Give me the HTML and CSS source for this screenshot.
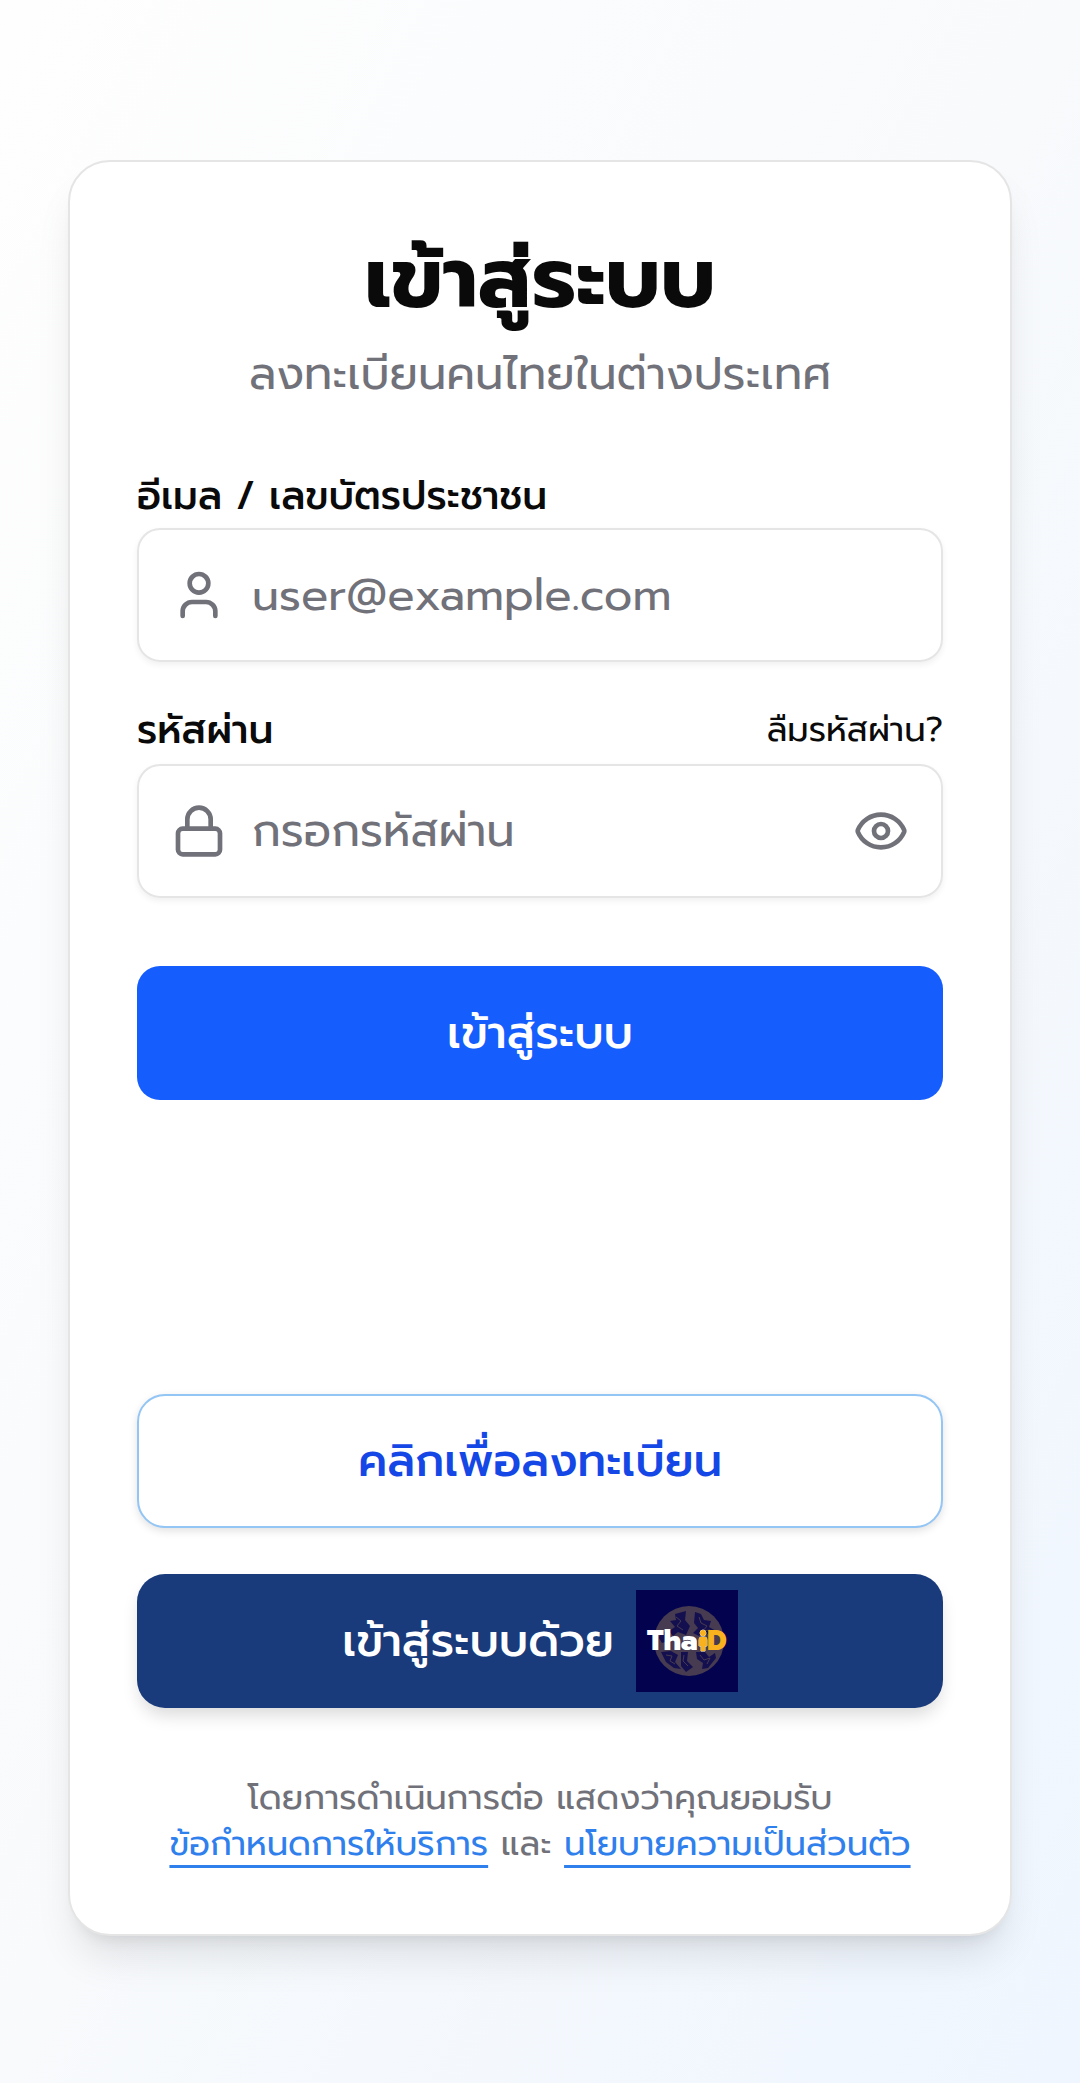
FILE: index.html
```html
<!DOCTYPE html>
<html lang="th">
<head>
<meta charset="utf-8">
<meta name="viewport" content="width=device-width, initial-scale=1">
<title>เข้าสู่ระบบ</title>
<link rel="stylesheet" href="styles.css">
</head>
<body>
<main class="card">
  <header class="header">
    <h1 class="title">เข้าสู่ระบบ</h1>
    <p class="subtitle">ลงทะเบียนคนไทยในต่างประเทศ</p>
  </header>

  <form class="form">
    <div class="group">
      <div class="label-row">
        <label class="label" for="user">อีเมล / เลขบัตรประชาชน</label>
      </div>
      <div class="field">
        <svg class="icon" viewBox="0 0 24 24" aria-hidden="true"><path d="M19 21v-2a4 4 0 0 0-4-4H9a4 4 0 0 0-4 4v2"/><circle cx="12" cy="7" r="4"/></svg>
        <input class="input" id="user" type="text" placeholder="user@example.com">
      </div>
    </div>

    <div class="group">
      <div class="label-row with-link">
        <label class="label" for="password">รหัสผ่าน</label>
        <a class="forgot" href="#">ลืมรหัสผ่าน?</a>
      </div>
      <div class="field">
        <svg class="icon" viewBox="0 0 24 24" aria-hidden="true"><rect x="3" y="11" width="18" height="11" rx="2"/><path d="M7 11V7a5 5 0 0 1 10 0v4"/></svg>
        <input class="input" id="password" type="password" placeholder="กรอกรหัสผ่าน">
        <button class="reveal" type="button" aria-label="แสดงรหัสผ่าน">
          <svg class="icon" viewBox="0 0 24 24" aria-hidden="true"><path d="M2.062 12.348a1 1 0 0 1 0-.696 10.75 10.75 0 0 1 19.876 0 1 1 0 0 1 0 .696 10.75 10.75 0 0 1-19.876 0"/><circle cx="12" cy="12" r="3"/></svg>
        </button>
      </div>
    </div>

    <button class="button primary" type="submit">เข้าสู่ระบบ</button>
  </form>

  <div class="alternatives">
    <button class="button register" type="button">คลิกเพื่อลงทะเบียน</button>
    <button class="button thaid" type="button">
      <span>เข้าสู่ระบบด้วย</span>
      <svg class="logo" viewBox="0 0 102 102" role="img" aria-label="ThaiD">
        <rect width="102" height="102" fill="#02024f"/>
        <circle cx="53" cy="51" r="35" fill="#463b50"/>
        <g fill="#14104f">
          <path d="M39 24l11-3-1 9 5 6-4 9-8-3-5 4-4-5 6-4-5-6 6-1z"/>
          <path d="M59 22l6 2 3 6 7 1-2 6 7 4-6 4-7-3-4 4-6-3 5-5-4-5z"/>
          <path d="M25 40l6 3 1 8-6 2-3-5z"/>
          <path d="M25 62l10-1 7 4-3 7 6 7-7-1-8-6z"/>
          <path d="M45 62l7 0-1 9 6 6-7 5-5-6z"/>
          <path d="M60 62l9 0 4 5 6-4 1 5-8 10-6 1 1-6-6-4z"/>
        </g>
        <g fill="none" stroke="#463b50" stroke-width="1">
          <path d="M40 27l5 4-4 5 6 4M63 27l2 6 6 3-4 5 7-1M30 65l6 1-2 5 5 3M48 65l-1 6 5 5M64 65l4 5 6-2-3 6"/>
        </g>
        <text class="logo-text" x="11" y="60" fill="#fff">Tha</text>
        <g fill="#f9b21d" stroke="#fff3c9" stroke-width="1" paint-order="stroke"><circle cx="67" cy="43" r="3"/><path d="M65 47h4q2 0 2 3v6h-2v5h-4v-5h-2v-6q0-3 2-3z"/></g>
        <text class="logo-text" x="71" y="60" fill="#f9b21d">D</text>
      </svg>
    </button>
  </div>

  <footer class="terms">
    โดยการดำเนินการต่อ แสดงว่าคุณยอมรับ<br>
    <a class="terms-link" href="#">ข้อกำหนดการให้บริการ</a> และ <a class="terms-link" href="#">นโยบายความเป็นส่วนตัว</a>
  </footer>
</main>
</body>
</html>
```
FILE: styles.css
```css
* { box-sizing: border-box; }

body {
  margin: 0;
  min-height: 100vh;
  padding: 160px 68px 146px;
  background: linear-gradient(to bottom right, #fefefe 0%, #f8fafc 50%, #eff6ff 100%);
  color: #0a0a0a;
  font-family: Prompt, "Noto Sans Thai", "Noto Sans", sans-serif;
}

input, button { font: inherit; color: inherit; }

.card {
  padding: 67px;
  border: 2px solid #e5e5e5;
  border-radius: 42px;
  background: #fff;
  box-shadow: 0 28px 42px -8px rgb(0 0 0 / 10%), 0 12px 17px -12px rgb(0 0 0 / 12%);
}

.header { margin-bottom: 53px; text-align: center; }
.title { margin: 0; font-size: 84px; font-weight: 700; line-height: 100px; }
.subtitle { margin: 0; color: #71717a; font-size: 45px; line-height: 90px; }

.form { display: flex; flex-direction: column; gap: 44px; }
.label-row {
  display: flex;
  align-items: center;
  justify-content: space-between;
  margin-bottom: 8px;
  line-height: 48px;
}
.with-link { margin-bottom: 10px; }
.label { font-size: 39px; font-weight: 500; }
.forgot { color: inherit; font-size: 34px; text-decoration: none; }

.field {
  display: flex;
  align-items: center;
  gap: 25px;
  height: 134px;
  padding: 0 32px;
  border: 2px solid #e5e5e5;
  border-radius: 23px;
  box-shadow: 0 3px 6px rgb(0 0 0 / 6%);
}
.icon {
  display: block;
  flex: none;
  width: 56px;
  height: 56px;
  fill: none;
  stroke: #71717a;
  stroke-width: 2;
  stroke-linecap: round;
  stroke-linejoin: round;
}
.input {
  flex: 1;
  min-width: 0;
  padding: 0;
  border: 0;
  outline: 0;
  background: none;
  font-size: 45px;
}
.input::placeholder { color: #71717a; opacity: 1; }
.reveal { padding: 0; border: 0; background: none; }

.button {
  display: flex;
  align-items: center;
  justify-content: center;
  gap: 22px;
  width: 100%;
  height: 134px;
  padding: 0;
  border: 0;
  border-radius: 28px;
  font-size: 45px;
  font-weight: 500;
}
.primary { margin-top: 24px; border-radius: 23px; background: #155dfc; color: #fff; }
.alternatives { display: grid; gap: 46px; margin-top: 294px; }
.register {
  border: 2px solid #93c5f5;
  background: #fff;
  color: #1447e6;
  box-shadow: 0 3px 8px rgb(0 0 0 / 12%);
}
.thaid { background: #193a7b; color: #fff; box-shadow: 0 10px 17px -3px rgb(0 0 0 / 15%); }
.logo { width: 102px; height: 102px; }
.logo-text { font-size: 28px; font-weight: 800; }

.terms { margin-top: 67px; color: #71717a; font-size: 34px; line-height: 46px; text-align: center; }
.terms-link {
  color: #2f80ed;
  text-decoration: underline 3px;
  text-decoration-skip-ink: none;
  text-underline-offset: 10px;
}
```
